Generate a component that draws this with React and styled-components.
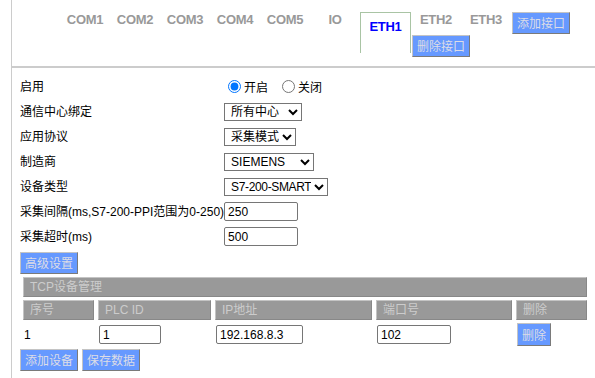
import styled, { createGlobalStyle, css } from 'styled-components'

const GlobalStyle = createGlobalStyle`
    body {
        margin: 0;
        background: #fff;
        font-family: "Liberation Sans", "Noto Sans CJK SC", sans-serif;
        font-size: 12px;
        color: #000;
    }
`

const Frame = styled.div`
    margin-left: 11px;
    border-left: 1px solid #ccc;
    min-height: 378px;
`

const TabBar = styled.div`
    height: 54px;
    padding: 12px 0 0 48px;
    border-bottom: 2px solid #ccc;
`

const Tab = styled.div`
    float: left;
    width: 50px;
    height: 22px;
    text-align: center;
    font: bold 13px/16px "Liberation Sans", sans-serif;
    letter-spacing: -0.3px;
    color: #999;

    ${props => props.$active && css`
        width: 49px;
        height: 34px;
        padding-top: 6px;
        border: 1px solid #a9c4a4;
        border-bottom: none;
        color: #0000ff;
    `}
`

const Button = styled.button`
    box-sizing: border-box;
    height: ${props => props.$h || 22}px;
    padding: 0 4px;
    margin: 0;
    background: #6699ff;
    color: #dcdce6;
    border: 1px solid;
    border-color: #c4c4c4 #7a7a7a #7a7a7a #c4c4c4;
    font: 12px/18px "Noto Sans CJK SC", sans-serif;
    cursor: pointer;
`

const TabButton = styled(Button)`
    float: left;
    margin: 0 0 1px 1px;
`

const Form = styled.div`
    padding: 6px 8px 0;
`

const FieldGrid = styled.div`
    display: grid;
    grid-template-columns: max-content auto;
    grid-auto-rows: 25px;
    align-items: center;
    justify-items: start;
`

const Label = styled.div`
    white-space: nowrap;
    line-height: 16px;
`

const RadioGroup = styled.div`
    display: flex;
    align-items: center;
`

const Radio = styled.input`
    width: 13px;
    height: 13px;
    margin: 0 3px 0 4px;
`

const RadioText = styled.span`
    margin-right: 10px;
    font-family: "Noto Sans CJK SC", sans-serif;
    line-height: 16px;
`

const Select = styled.select`
    width: ${props => props.$w}px;
    height: 18px;
    padding: 0 0 0 2px;
    font: 12px "Liberation Sans", "Noto Sans CJK SC", sans-serif;
    letter-spacing: ${props => props.$tight ? '-0.35px' : 'normal'};
    color: #000;
    background: #fff;
    border: 1px solid #767676;
    border-radius: 0;
`

const TextInput = styled.input`
    box-sizing: border-box;
    width: ${props => props.$w}px;
    height: 19px;
    padding: 0 3px;
    margin: 0;
    font: 12px "Liberation Sans", sans-serif;
    color: #000;
    border: 1px solid #767676;
    border-radius: 2px;
    outline: none;
`

const AdvancedRow = styled.div`
    margin-top: 3px;
`

const DeviceTable = styled.div`
    display: grid;
    grid-template-columns: 71px 113px 157px 136px 71px;
    column-gap: 4px;
    row-gap: 3px;
    margin: 3px 0 0 3px;
`

const HeadCell = styled.div`
    box-sizing: border-box;
    height: 20px;
    padding-left: 6px;
    background: #999;
    color: #ccc;
    border: 1px solid;
    border-color: #c4c4c4 #888 #888 #c4c4c4;
    line-height: 18px;
    white-space: nowrap;
    ${props => props.$span && css`
        grid-column: 1 / -1;
    `}
`

const DataCell = styled.div`
    height: 23px;
    display: flex;
    align-items: center;
    padding-left: 1px;
`

const Actions = styled.div`
    display: flex;
    gap: 4px;
    margin-top: 3px;
`

const comTabs = ['COM1', 'COM2', 'COM3', 'COM4', 'COM5', 'IO', 'ETH1', 'ETH2', 'ETH3']

export default function App() {
    return (
        <Frame>
            <GlobalStyle />
            <TabBar>
                {comTabs.map(name => (
                    <Tab key={name} $active={name === 'ETH1'}>{name}</Tab>
                ))}
                <TabButton>添加接口</TabButton>
                <TabButton>删除接口</TabButton>
            </TabBar>

            <Form>
                <FieldGrid>
                    <Label>启用</Label>
                    <RadioGroup>
                        <Radio type='radio' name='enable' defaultChecked />
                        <RadioText>开启</RadioText>
                        <Radio type='radio' name='enable' />
                        <RadioText>关闭</RadioText>
                    </RadioGroup>

                    <Label>通信中心绑定</Label>
                    <Select $w={78} defaultValue='all'>
                        <option value='all'>所有中心</option>
                    </Select>

                    <Label>应用协议</Label>
                    <Select $w={72} defaultValue='collect'>
                        <option value='collect'>采集模式</option>
                    </Select>

                    <Label>制造商</Label>
                    <Select $w={90} defaultValue='siemens'>
                        <option value='siemens'>SIEMENS</option>
                    </Select>

                    <Label>设备类型</Label>
                    <Select $w={104} $tight defaultValue='smart'>
                        <option value='smart'>S7-200-SMART</option>
                    </Select>

                    <Label>采集间隔(ms,S7-200-PPI范围为0-250)</Label>
                    <TextInput $w={74} defaultValue='250' />

                    <Label>采集超时(ms)</Label>
                    <TextInput $w={74} defaultValue='500' />
                </FieldGrid>

                <AdvancedRow>
                    <Button>高级设置</Button>
                </AdvancedRow>

                <DeviceTable>
                    <HeadCell $span>TCP设备管理</HeadCell>
                    <HeadCell>序号</HeadCell>
                    <HeadCell>PLC ID</HeadCell>
                    <HeadCell>IP地址</HeadCell>
                    <HeadCell>端口号</HeadCell>
                    <HeadCell>删除</HeadCell>

                    <DataCell>1</DataCell>
                    <DataCell><TextInput $w={62} defaultValue='1' /></DataCell>
                    <DataCell><TextInput $w={87} defaultValue='192.168.8.3' /></DataCell>
                    <DataCell><TextInput $w={74} defaultValue='102' /></DataCell>
                    <DataCell><Button $h={23}>删除</Button></DataCell>
                </DeviceTable>

                <Actions>
                    <Button>添加设备</Button>
                    <Button>保存数据</Button>
                </Actions>
            </Form>
        </Frame>
    )
}
